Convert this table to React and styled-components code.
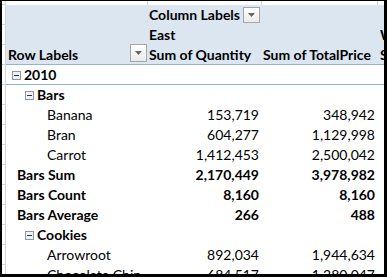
import React from 'react'
import styled, { createGlobalStyle } from 'styled-components'

const GlobalStyle = createGlobalStyle`
	html, body {
		margin: 0;
		padding: 0;
		background: #fff;
	}
`

const Frame = styled.div`
	width: 387px;
	height: 277px;
	box-sizing: border-box;
	border-style: solid;
	border-color: #000;
	border-width: 1px 3px 3px 2px;
	overflow: hidden;
	background: #fff;
	font-family: Lato, 'Liberation Sans', sans-serif;
	font-size: 14px;
	color: #000;
`

const Row = styled.div`
	display: grid;
	grid-template-columns: 4px 142px 114px 116px 6px;
	height: ${p => p.$h || 20}px;
`

const Gutter = styled.div`
	box-sizing: border-box;
	background: #fff;
	border-right: 1px solid #d4d4d4;
	border-bottom: 1px solid #d4d4d4;
`

const TopCell = styled.div`
	box-sizing: border-box;
	border-right: 1px solid #d4d4d4;
`

const Cell = styled.div`
	box-sizing: border-box;
	display: flex;
	align-items: flex-start;
	justify-content: ${p => (p.$num ? 'flex-end' : 'flex-start')};
	padding: 0 ${p => (p.$num ? 3 : 0)}px 0 ${p => p.$indent || 0}px;
	line-height: 19px;
	white-space: nowrap;
	font-weight: ${p => (p.$bold ? 700 : 400)};
	background: ${p => (p.$header ? '#dce6f1' : '#fff')};
	border-bottom: 1px solid ${p => p.$line || 'transparent'};
	min-width: 0;
`

const Label = styled.span`
	flex: 1;
`

const FilterButton = styled.span`
	box-sizing: border-box;
	flex: none;
	display: flex;
	align-items: center;
	justify-content: center;
	width: ${p => p.$w}px;
	height: ${p => p.$h}px;
	margin: ${p => p.$mt}px ${p => p.$mr}px 0 0;
	border: 1px solid #a5a5a5;
	background: linear-gradient(#ffffff, #ebebeb);
`

const Toggle = styled.svg`
	flex: none;
	margin: 6px 3px 0 0;
`

const Minus = () => (
	<Toggle width='9' height='9' viewBox='0 0 9 9'>
		<rect x='0.5' y='0.5' width='8' height='8' fill='#eef1f5' stroke='#8d96a3' />
		<rect x='2' y='4' width='5' height='1' fill='#333' />
	</Toggle>
)

const Filter = ({ w, h, mt, mr }) => (
	<FilterButton $w={w} $h={h} $mt={mt} $mr={mr}>
		<svg width='7' height='4' viewBox='0 0 7 4'>
			<polygon points='0,0 7,0 3.5,4' fill='#666' />
		</svg>
	</FilterButton>
)

const body = [
	{ label: '2010', indent: 6, bold: true, toggle: true, line: '#95b3d7' },
	{ label: 'Bars', indent: 19, bold: true, toggle: true },
	{ label: 'Banana', indent: 41, q: '153,719', p: '348,942' },
	{ label: 'Bran', indent: 41, q: '604,277', p: '1,129,998' },
	{ label: 'Carrot', indent: 41, q: '1,412,453', p: '2,500,042' },
	{ label: 'Bars Sum', indent: 11, bold: true, q: '2,170,449', p: '3,978,982' },
	{ label: 'Bars Count', indent: 11, bold: true, q: '8,160', p: '8,160' },
	{ label: 'Bars Average', indent: 11, bold: true, q: '266', p: '488' },
	{ label: 'Cookies', indent: 19, bold: true, toggle: true },
	{ label: 'Arrowroot', indent: 41, q: '892,034', p: '1,944,634' },
	{ label: 'Chocolate Chip', indent: 41, q: '684,517', p: '1,280,047' },
]

const App = () => {
	return (
		<>
			<GlobalStyle />
			<Frame>
				<Row $h={4}>
					<Gutter />
					<TopCell />
					<TopCell />
					<TopCell />
					<div />
				</Row>

				<Row>
					<Gutter />
					<Cell $header />
					<Cell $header $bold $indent={1}>
						<Label>Column Labels</Label>
						<Filter w={17} h={16} mt={2} mr={2} />
					</Cell>
					<Cell $header />
					<Cell $header />
				</Row>
				<Row>
					<Gutter />
					<Cell $header />
					<Cell $header $bold $indent={1}>East</Cell>
					<Cell $header />
					<Cell $header $bold $indent={2}>W</Cell>
				</Row>
				<Row>
					<Gutter />
					<Cell $header $bold $indent={2} $line='#95b3d7'>
						<Label>Row Labels</Label>
						<Filter w={17} h={18} mt={-1} mr={1} />
					</Cell>
					<Cell $header $bold $indent={1} $line='#95b3d7'>Sum of Quantity</Cell>
					<Cell $header $bold $indent={1} $line='#95b3d7'>Sum of TotalPrice</Cell>
					<Cell $header $bold $indent={2} $line='#95b3d7'>S</Cell>
				</Row>

				{body.map(r => (
					<Row key={r.label}>
						<Gutter />
						<Cell $bold={r.bold} $indent={r.indent} $line={r.line}>
							{r.toggle && <Minus />}
							{r.label}
						</Cell>
						<Cell $num $bold={r.bold} $line={r.line}>{r.q}</Cell>
						<Cell $num $bold={r.bold} $line={r.line}>{r.p}</Cell>
						<Cell $line={r.line} />
					</Row>
				))}
			</Frame>
		</>
	)
}

export default App
